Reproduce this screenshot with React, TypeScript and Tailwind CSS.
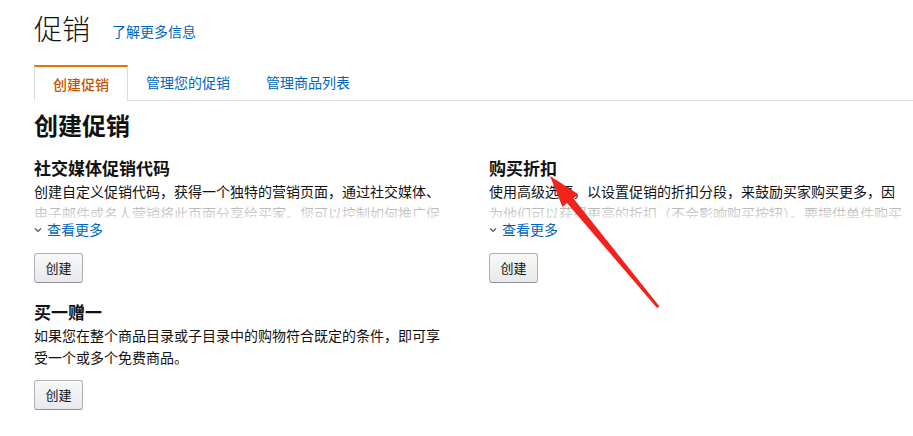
import { ReactNode } from "react";

const font = { fontFamily: '"Noto Sans CJK SC", "Liberation Sans", sans-serif' };

function CreateButton() {
  return (
    <button className="h-[30px] w-[49px] rounded-[3px] border border-[#adb1b8] border-b-[#8d9096] bg-linear-to-b from-[#f7f8fa] to-[#e7e9ec] text-[13px] text-[#111] shadow-[0_1px_0_rgba(255,255,255,0.6)_inset]">
      创建
    </button>
  );
}

function ChevronDown() {
  return (
    <svg width="8" height="6" viewBox="0 0 8 6" className="mr-[5px] mt-[2px]">
      <path d="M1 1.5 L4 4.5 L7 1.5" fill="none" stroke="#555" strokeWidth="1.2" />
    </svg>
  );
}

function Promo({ title, children, truncated }: { title: string; children: ReactNode; truncated?: boolean }) {
  return (
    <div className="flex flex-col">
      <h3 className="text-[17px] font-bold leading-[24px] text-[#111]">{title}</h3>
      {truncated ? (
        <>
          <div className="relative max-h-[38px] overflow-hidden text-[14px] leading-[22px] text-[#111]">
            {children}
            <div className="absolute bottom-0 left-0 right-0 h-[17px] bg-linear-to-b from-white/60 to-white/85" />
          </div>
          <a href="#" className="flex items-center text-[14px] leading-[22px] text-[#0066c0]">
            <ChevronDown />
            查看更多
          </a>
          <div className="mt-[13px]">
            <CreateButton />
          </div>
        </>
      ) : (
        <>
          <p className="text-[14px] leading-[22px] text-[#111]">{children}</p>
          <div className="mt-3">
            <CreateButton />
          </div>
        </>
      )}
    </div>
  );
}

export default function App() {
  return (
    <div className="relative h-[436px] w-[913px] overflow-hidden bg-white" style={font}>
      {/* Page header */}
      <div className="flex items-end pl-[34px] pt-[11px]">
        <h1 className="text-[28px] font-light leading-[34px] text-[#111]">促销</h1>
        <a href="#" className="mb-[3px] ml-[22px] text-[14px] text-[#0066c0]">了解更多信息</a>
      </div>

      {/* Tabs */}
      <div className="ml-[34px] mt-[20px] flex border-b border-[#ddd]">
        <div className="-mb-px flex h-[36px] items-center border-x border-t-2 border-x-[#ddd] border-t-[#e77600] bg-white px-[18px] text-[14px] font-medium text-[#c45500]">
          创建促销
        </div>
        <a href="#" className="flex h-[35px] items-center px-[18px] text-[14px] text-[#0066c0]">管理您的促销</a>
        <a href="#" className="flex h-[35px] items-center px-[18px] text-[14px] text-[#0066c0]">管理商品列表</a>
      </div>

      <div className="pl-[34px]">
        <h2 className="mt-[9px] text-[24px] font-bold leading-[30px] text-[#111]">创建促销</h2>

        <div className="mt-[16px] grid w-[868px] grid-cols-[413px_413px] gap-x-[42px] gap-y-[17px]">
          <Promo title="社交媒体促销代码" truncated>
            创建自定义促销代码，获得一个独特的营销页面，通过社交媒体、电子邮件或名人营销将此页面分享给买家。您可以控制如何推广促销，并跟踪其效果。
          </Promo>
          <Promo title="购买折扣" truncated>
            使用高级选项，以设置促销的折扣分段，来鼓励买家购买更多，因为他们可以获得更高的折扣（不会影响购买按钮）。要提供单件购买折扣，请使用价格折扣功能。
          </Promo>
          <Promo title="买一赠一">
            如果您在整个商品目录或子目录中的购物符合既定的条件，即可享受一个或多个免费商品。
          </Promo>
        </div>
      </div>

      {/* Red annotation arrow */}
      <svg className="pointer-events-none absolute left-0 top-0" width="913" height="436">
        <polygon
          points="550,176 578,194 573.5,198.5 659.5,306.5 657,308 567,203 562.5,207"
          fill="#f2231c"
        />
      </svg>
    </div>
  );
}
